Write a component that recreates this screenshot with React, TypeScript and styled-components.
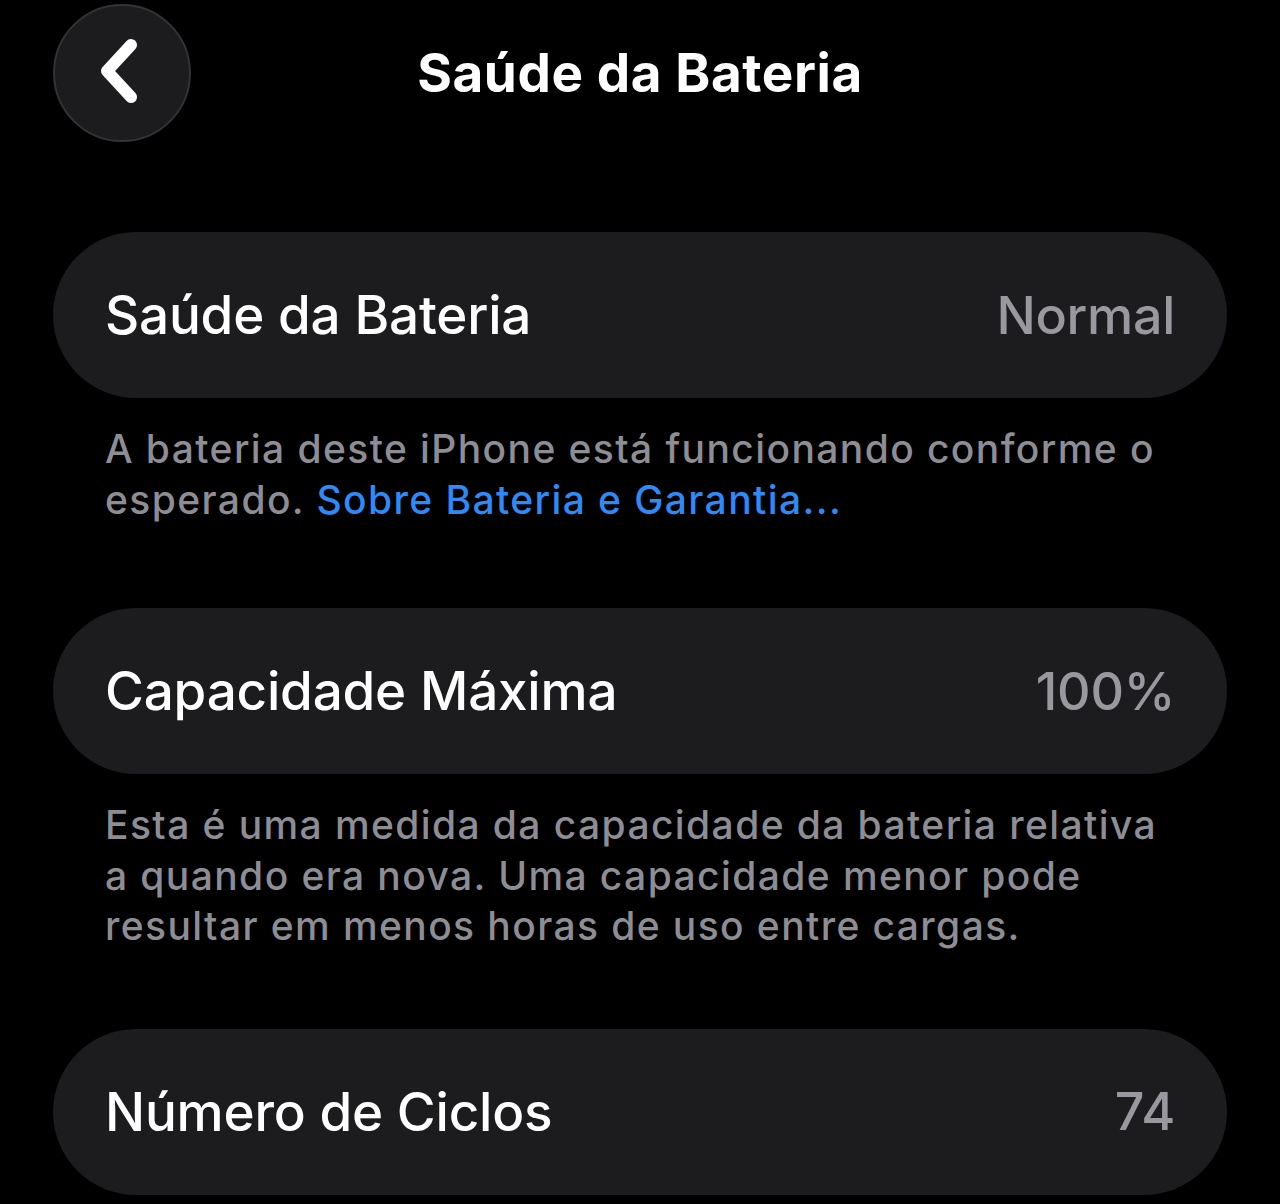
import React from 'react';
import styled, { createGlobalStyle } from 'styled-components';

const GlobalStyle = createGlobalStyle`
  html, body {
    margin: 0;
    padding: 0;
    background: #000;
  }
  body {
    font-family: 'Inter', 'Liberation Sans', sans-serif;
    -webkit-font-smoothing: antialiased;
  }
`;

const Page = styled.div`
  box-sizing: border-box;
  width: 1280px;
  height: 1204px;
  overflow: hidden;
  padding: 4px 53px 0;
  background: #000;
`;

const Header = styled.header`
  display: grid;
  grid-template-columns: 138px 1fr 138px;
  align-items: center;
  height: 138px;
`;

const BackButton = styled.button`
  width: 138px;
  height: 138px;
  border-radius: 50%;
  background: #1c1c1e;
  border: 2px solid #333336;
  box-sizing: border-box;
  display: flex;
  align-items: center;
  justify-content: center;
  padding: 0;
  cursor: pointer;
`;

const Title = styled.h1`
  margin: 0;
  text-align: center;
  color: #fff;
  font-size: 53px;
  font-weight: 700;
  letter-spacing: 0.6px;
`;

const Card = styled.div<{ $top: number }>`
  margin-top: ${(p) => p.$top}px;
  height: 166px;
  border-radius: 83px;
  background: #1c1c1e;
  display: flex;
  align-items: center;
  justify-content: space-between;
  padding: 0 52px;
`;

const Label = styled.span`
  color: #fff;
  font-size: 53px;
  font-weight: 500;
  letter-spacing: -0.2px;
`;

const Value = styled.span`
  color: #98989e;
  font-size: 52px;
  font-weight: 500;
  letter-spacing: -0.3px;
`;

const Footnote = styled.p<{ $top: number }>`
  margin: ${(p) => p.$top}px 0 0;
  padding: 0 52px;
  color: #8d8d93;
  font-size: 39px;
  line-height: 50.5px;
  font-weight: 500;
  letter-spacing: 1.4px;
  white-space: nowrap;
`;

const Link = styled.a`
  color: #2f8af5;
  text-decoration: none;
`;

export default function App() {
  return (
    <>
      <GlobalStyle />
      <Page>
        <Header>
          <BackButton aria-label="Voltar">
            <svg width="48" height="72" viewBox="0 0 48 72">
              <path
                d="M33 8 L9 34 L33 60"
                fill="none"
                stroke="#fff"
                strokeWidth="12"
                strokeLinecap="round"
                strokeLinejoin="round"
              />
            </svg>
          </BackButton>
          <Title>Saúde da Bateria</Title>
          <div />
        </Header>

        <Card $top={90}>
          <Label>Saúde da Bateria</Label>
          <Value>Normal</Value>
        </Card>
        <Footnote $top={26}>
          A bateria deste iPhone está funcionando conforme o
          <br />
          esperado. <Link href="#">Sobre Bateria e Garantia...</Link>
        </Footnote>

        <Card $top={83}>
          <Label>Capacidade Máxima</Label>
          <Value>100%</Value>
        </Card>
        <Footnote $top={26}>
          Esta é uma medida da capacidade da bateria relativa
          <br />
          a quando era nova. Uma capacidade menor pode
          <br />
          resultar em menos horas de uso entre cargas.
        </Footnote>

        <Card $top={77}>
          <Label>Número de Ciclos</Label>
          <Value>74</Value>
        </Card>
      </Page>
    </>
  );
}
